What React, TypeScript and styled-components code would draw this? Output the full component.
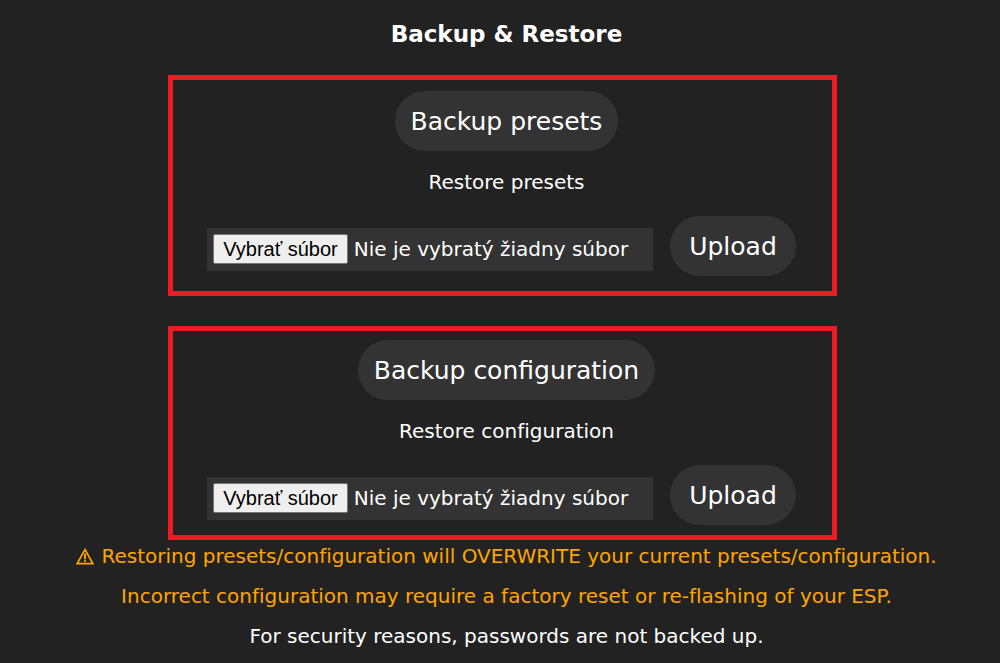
import React, { useState } from "react";
import styled, { createGlobalStyle } from "styled-components";

const GlobalStyle = createGlobalStyle`
  * { box-sizing: border-box; }
  body {
    margin: 0;
    background: #222;
    color: #fff;
    font-family: Verdana, "DejaVu Sans", sans-serif;
    font-size: 20px;
    font-variant-ligatures: none;
  }
`;

const Page = styled.main`
  display: flex;
  flex-direction: column;
  align-items: center;
  padding: 14px 0 7px 13px;
`;

const Title = styled.h3`
  margin: 0 0 21px;
  font-size: 23px;
  line-height: 40px;
`;

const Panel = styled.section<{ $compact?: boolean }>`
  display: flex;
  flex-direction: column;
  align-items: center;
  width: 100%;
  max-width: 669px;
  margin-right: 8px;
  margin-bottom: ${(p) => (p.$compact ? 0 : 30)}px;
  padding: ${(p) => (p.$compact ? "9px 0 10px 8px" : "11px 0 15px 8px")};
  border: 5px solid #ed1c24;
`;

const PillButton = styled.button<{ $wide?: boolean }>`
  height: 60px;
  padding: 0 ${(p) => (p.$wide ? 19 : 16)}px;
  border: 0;
  border-radius: 30px;
  background: #333;
  color: #fff;
  font-family: inherit;
  font-size: 25px;
  white-space: nowrap;
  cursor: pointer;
`;

const Caption = styled.p`
  margin: 11px 0 14px;
  line-height: 40px;
`;

const UploadRow = styled.form`
  display: flex;
  align-items: center;
  gap: 17px;
  margin-right: 10px;
`;

const FileField = styled.label`
  position: relative;
  display: flex;
  align-items: center;
  gap: 6px;
  width: 446px;
  height: 43px;
  margin-top: 6px;
  padding: 0 6px;
  background: #333;
  white-space: nowrap;
  overflow: hidden;
`;

const FileInput = styled.input`
  position: absolute;
  inset: 0;
  width: 100%;
  opacity: 0;
  cursor: pointer;
`;

const ChooseFile = styled.span`
  padding: 0 9px;
  border: 1px solid #767676;
  border-radius: 2px;
  background: #efefef;
  color: #000;
  font-family: Arial, "Liberation Sans", sans-serif;
  line-height: 28px;
`;

const Notes = styled.div`
  display: flex;
  flex-direction: column;
  align-items: center;
  gap: 8px;
`;

const Note = styled.p<{ $warning?: boolean }>`
  display: flex;
  align-items: center;
  gap: 7px;
  margin: 0;
  color: ${(p) => (p.$warning ? "#ffa500" : "#fff")};
  line-height: 32px;
`;

const WarningIcon = () => (
  <svg width="18" height="17" viewBox="0 0 18 17" fill="none" stroke="currentColor" aria-hidden="true">
    <path d="M9 1.5 L16.8 15.6 H1.2 Z" strokeWidth="1.6" />
    <path d="M9 5.5 V11.3 M9 12.2 V14" strokeWidth="1.9" />
  </svg>
);

function BackupPanel({ subject, compact }: { subject: string; compact?: boolean }) {
  const [fileName, setFileName] = useState("");
  return (
    <Panel $compact={compact}>
      <PillButton type="button">Backup {subject}</PillButton>
      <Caption>Restore {subject}</Caption>
      <UploadRow onSubmit={(e) => e.preventDefault()}>
        <FileField>
          <FileInput type="file" onChange={(e) => setFileName(e.target.files?.[0]?.name ?? "")} />
          <ChooseFile>Vybrať súbor</ChooseFile>
          <span>{fileName || "Nie je vybratý žiadny súbor"}</span>
        </FileField>
        <PillButton type="submit" $wide>Upload</PillButton>
      </UploadRow>
    </Panel>
  );
}

export default function App() {
  return (
    <>
      <GlobalStyle />
      <Page>
        <Title>Backup &amp; Restore</Title>
        <BackupPanel subject="presets" />
        <BackupPanel subject="configuration" compact />
        <Notes>
          <Note $warning>
            <WarningIcon />
            Restoring presets/configuration will OVERWRITE your current presets/configuration.
          </Note>
          <Note $warning>Incorrect configuration may require a factory reset or re-flashing of your ESP.</Note>
          <Note>For security reasons, passwords are not backed up.</Note>
        </Notes>
      </Page>
    </>
  );
}
